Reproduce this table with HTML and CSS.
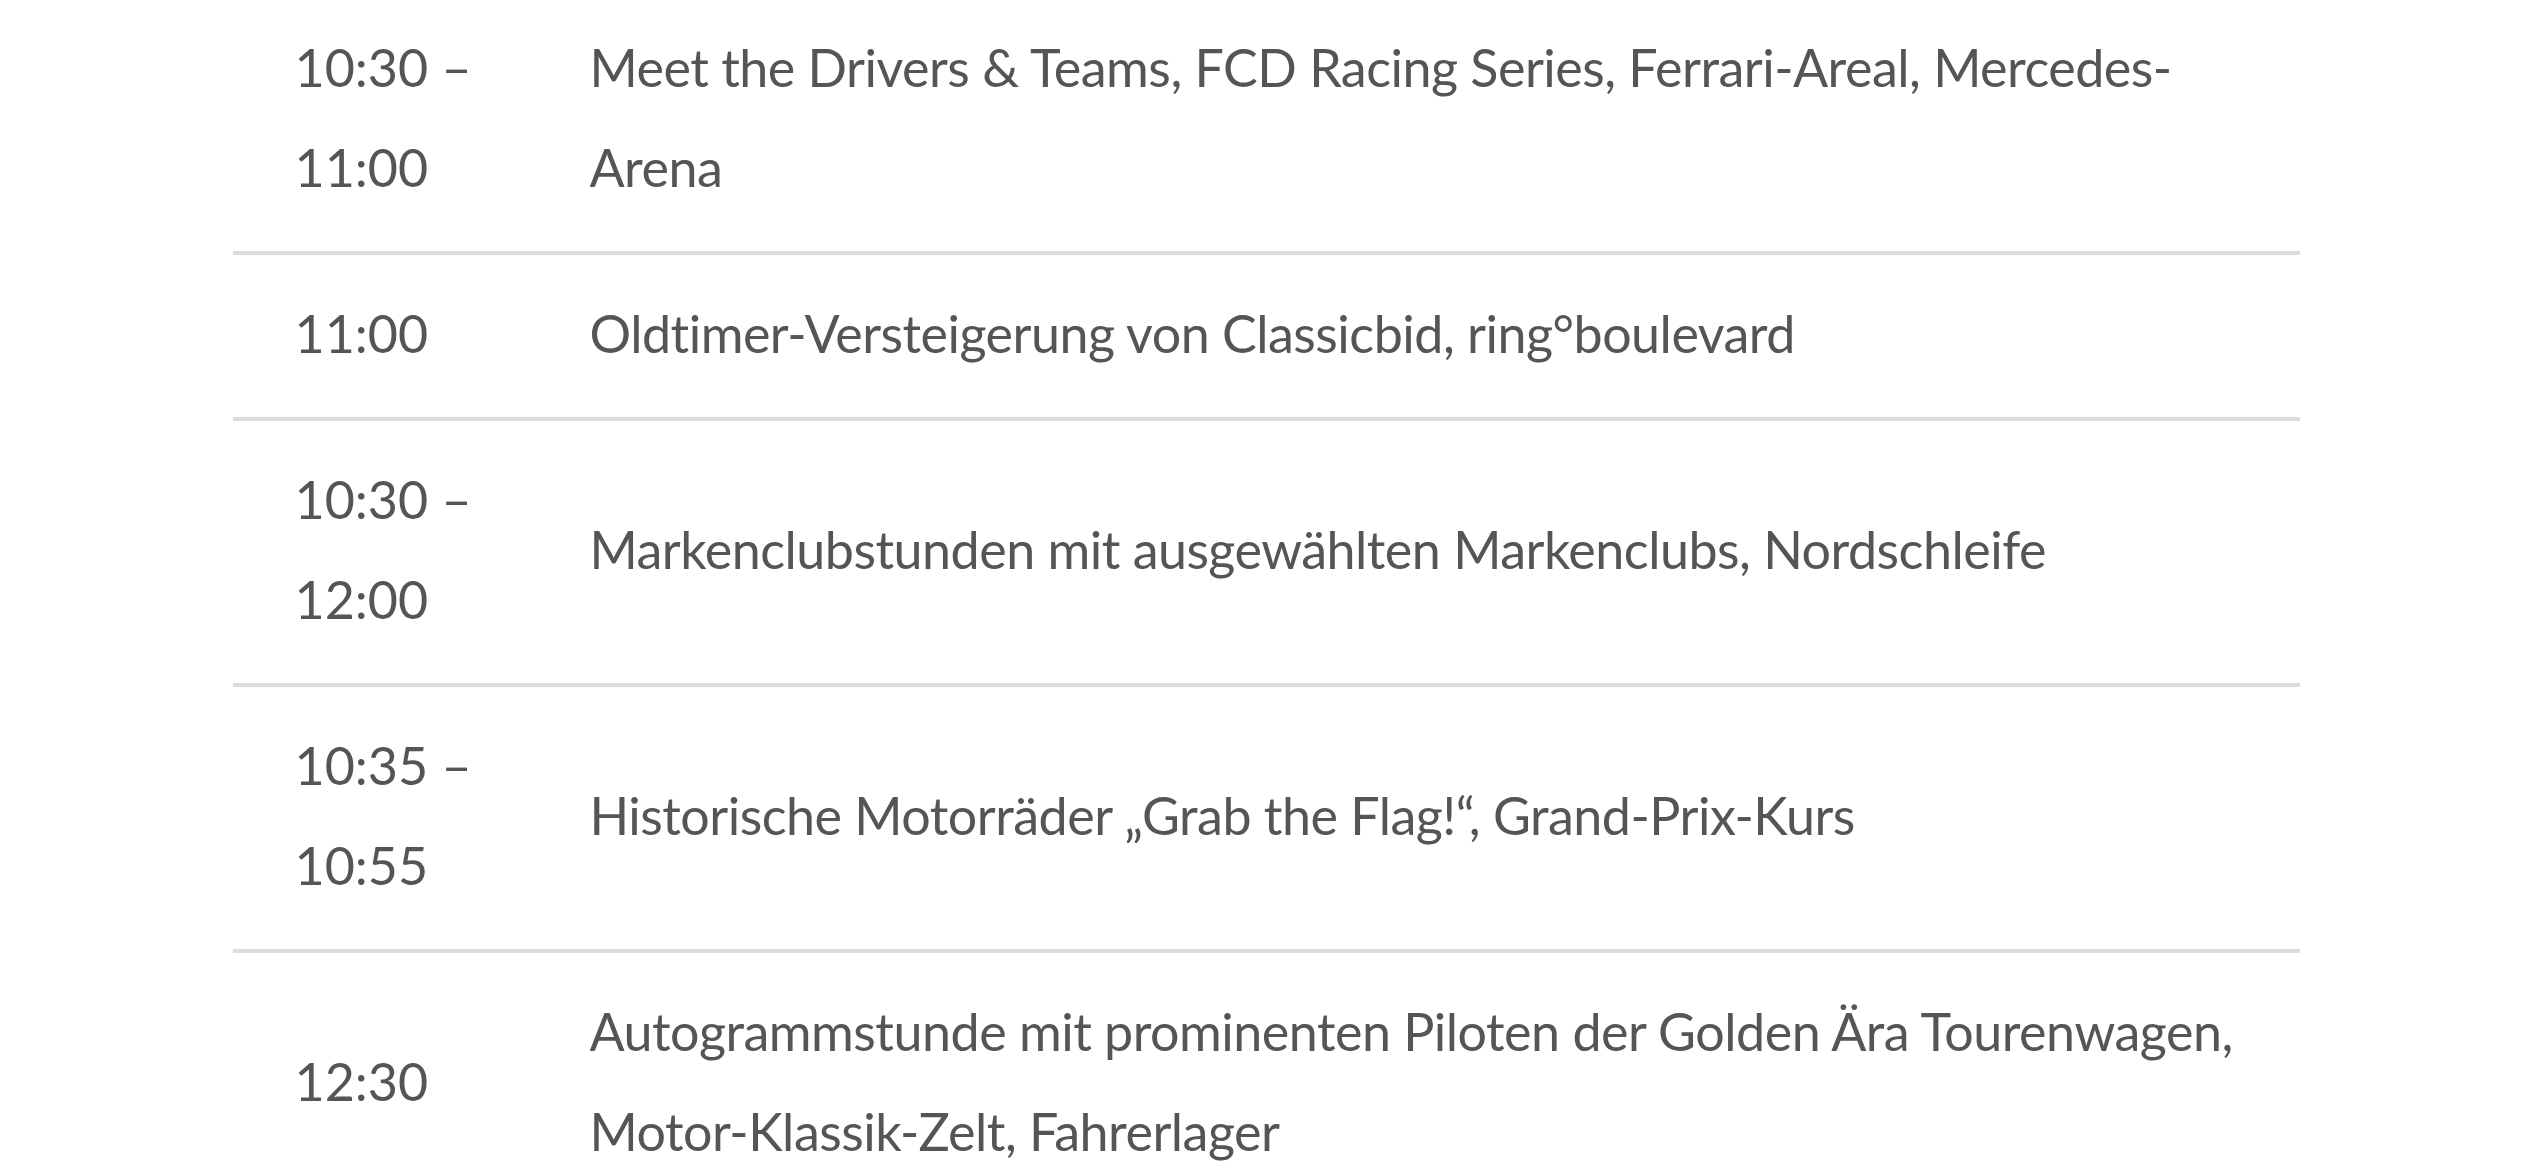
FILE: index.html
```html
<!DOCTYPE html>
<html lang="de">
<head>
<meta charset="utf-8">
<title>Programm</title>
<link rel="stylesheet" href="styles.css">
</head>
<body>
<div class="schedule">
  <div class="row">
    <div class="time">10:30 – 11:00</div>
    <div class="desc">Meet the Drivers &amp; Teams, FCD Racing Series, Ferrari-Areal, Mercedes-Arena</div>
  </div>
  <div class="row">
    <div class="time">11:00</div>
    <div class="desc">Oldtimer-Versteigerung von Classicbid, ring°boulevard</div>
  </div>
  <div class="row">
    <div class="time">10:30 – 12:00</div>
    <div class="desc">Markenclubstunden mit ausgewählten Markenclubs, Nordschleife</div>
  </div>
  <div class="row">
    <div class="time">10:35 – 10:55</div>
    <div class="desc">Historische Motorräder „Grab the Flag!“, Grand-Prix-Kurs</div>
  </div>
  <div class="row">
    <div class="time">12:30</div>
    <div class="desc">Autogrammstunde mit prominenten Piloten der Golden Ära Tourenwagen, Motor-Klassik-Zelt, Fahrerlager</div>
  </div>
</div>
</body>
</html>
```
FILE: styles.css
```css
html, body {
  margin: 0;
  padding: 0;
  background: #ffffff;
}

.schedule {
  width: 2067px;
  margin: -11px auto 0;
  font-family: "Lato", "Liberation Sans", sans-serif;
  font-size: 52px;
  letter-spacing: -0.5px;
  font-variant-ligatures: none;
  line-height: 100px;
  color: #555555;
}

.row {
  display: grid;
  grid-template-columns: 357px 1fr;
  align-items: center;
  padding: 28px 0 34px;
  border-bottom: 4px solid #dcdcdc;
}

.time {
  padding-left: 62px;
  letter-spacing: 0;
}

.desc {
  padding-right: 20px;
}
```
